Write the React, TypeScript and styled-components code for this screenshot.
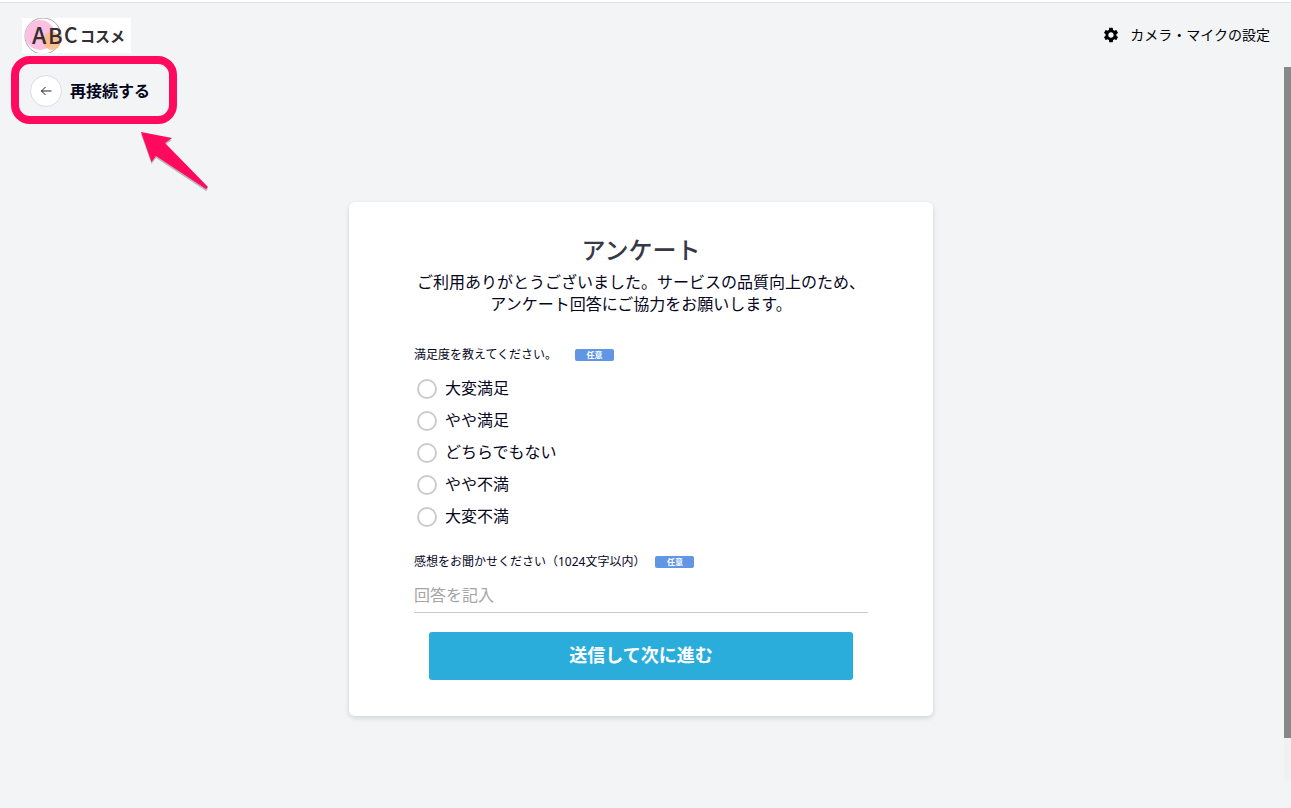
import React from "react";
import styled, { createGlobalStyle } from "styled-components";

const GlobalStyle = createGlobalStyle`
  *, *::before, *::after { box-sizing: border-box; }
  body {
    margin: 0;
    background: #f2f4f6;
    color: #05051c;
    font-family: "Noto Sans", "Noto Sans CJK JP", sans-serif;
    font-size: 16px;
  }
  button, input { font: inherit; color: inherit; }
`;

const Page = styled.div`
  display: flex;
  flex-direction: column;
  min-height: 100vh;
  padding-bottom: 27px;
`;

const TopLine = styled.div`
  height: 3px;
  background: #fff;
  border-bottom: 1px solid #dfe3e4;
`;

const Header = styled.header`
  display: flex;
  align-items: center;
  justify-content: space-between;
  height: 64px;
  padding: 0 21px 0 22px;
`;

const Logo = styled.svg`
  display: block;
  width: 109px;
  height: 35px;
`;

const SettingsButton = styled.button`
  display: flex;
  align-items: center;
  gap: 10px;
  padding: 0;
  border: 0;
  background: none;
  color: #000;
  font-size: 14px;
  line-height: 20px;
  cursor: pointer;

  svg { width: 18px; height: 18px; }
`;

const Main = styled.main`
  display: flex;
  flex: 1;
`;

const Content = styled.div`
  flex: 1;
  padding: 8px 22px 65px 20px;
`;

const ScrollTrack = styled.div`
  width: 7px;
  background: #f1f1f1;
`;

const ScrollThumb = styled.div`
  height: 94%;
  background: #888;
`;

const BackArea = styled.div`
  position: relative;
  width: fit-content;
  padding-left: 10px;
`;

const BackButton = styled.button`
  display: flex;
  align-items: center;
  gap: 8px;
  padding: 0;
  border: 0;
  background: none;
  font-weight: 700;
  line-height: 30px;
  cursor: pointer;
`;

const BackCircle = styled.span`
  display: flex;
  align-items: center;
  justify-content: center;
  width: 32px;
  height: 32px;
  border: 1px solid #dcdce6;
  border-radius: 50%;
  background: #fff;

  svg { width: 12px; height: 12px; }
`;

const Highlight = styled.div`
  position: absolute;
  top: -19px;
  left: -9px;
  width: 166px;
  height: 68px;
  border: 8px solid #ff0a5c;
  border-radius: 19px;
  pointer-events: none;
`;

const Pointer = styled.svg`
  position: absolute;
  top: 54px;
  left: 118px;
  width: 74px;
  height: 66px;
  pointer-events: none;
`;

const Card = styled.form`
  max-width: 584px;
  margin: 95px auto 0;
  padding: 32px 65px 36px;
  border-radius: 6px;
  background: #fff;
  box-shadow: 0 2px 5px rgba(0, 0, 0, 0.14);
`;

const Title = styled.h1`
  margin: 0;
  color: #363848;
  font-size: 24px;
  font-weight: 500;
  line-height: 32px;
  text-align: center;
`;

const Lead = styled.p`
  margin: 5px 0 0;
  line-height: 22px;
  text-align: center;
`;

const Question = styled.fieldset`
  min-width: 0;
  margin: 32px 0 0;
  padding: 0;
  border: 0;
`;

const TextQuestion = styled.div`
  margin-top: 21px;
`;

const QuestionHead = styled.div<{ $gap: number }>`
  display: flex;
  align-items: center;
  gap: ${(p) => p.$gap}px;
  font-size: 12px;
  line-height: 16px;
`;

const Badge = styled.span`
  width: 39px;
  height: 12px;
  border-radius: 2px;
  background: #6096e4;
  color: #fff;
  font-size: 8px;
  font-weight: 700;
  line-height: 12px;
  text-align: center;
`;

const Options = styled.div`
  padding: 10px 0 0 3px;
`;

const Option = styled.label`
  display: flex;
  align-items: center;
  gap: 8px;
  height: 32px;
  line-height: 22px;
  cursor: pointer;
`;

const OptionText = styled.span`
  padding-bottom: 2px;
`;

const Radio = styled.input`
  appearance: none;
  width: 20px;
  height: 20px;
  margin: 0;
  border: 2px solid #ccc;
  border-radius: 50%;
  background: #fff;

  &:checked { border: 6px solid #2aaddb; }
`;

const Answer = styled.input`
  display: block;
  width: 100%;
  height: 36px;
  margin-top: 7px;
  padding: 0;
  border: 0;
  border-bottom: 1px solid #ccc;
  outline: 0;
  background: none;
  line-height: 22px;

  &::placeholder { color: #a5a5a5; opacity: 1; }
`;

const Submit = styled.button`
  display: block;
  width: calc(100% - 30px);
  height: 48px;
  margin: 19px auto 0;
  padding: 0 0 2px;
  border: 0;
  border-radius: 3px;
  background: #2aaddb;
  color: #fff;
  font-size: 18px;
  font-weight: 700;
  line-height: 24px;
  cursor: pointer;
`;

const choices = ["大変満足", "やや満足", "どちらでもない", "やや不満", "大変不満"];

export default function App() {
  return (
    <Page>
      <GlobalStyle />
      <TopLine />
      <Header>
        <Logo viewBox="0 0 109 35" role="img" aria-label="ABCコスメ">
          <rect width="109" height="35" fill="#fff" />
          <circle cx="21" cy="18" r="18" fill="none" stroke="#aaa" strokeWidth="1" />
          <circle cx="18" cy="17" r="15" fill="#fdbfe2" />
          <circle cx="30" cy="23" r="9" fill="#fdb97c" fillOpacity="0.85" />
          <g fill="#332e30" fontFamily="'Noto Sans CJK JP', sans-serif" fontWeight="500">
            <text x="10" y="26" fontSize="23">A</text>
            <text x="26" y="26" fontSize="22">B</text>
            <text x="42" y="25" fontSize="21">C</text>
            <text x="58" y="24" fontSize="15" fontWeight="700">コ</text>
            <text x="73" y="24" fontSize="15" fontWeight="700">ス</text>
            <text x="88" y="24" fontSize="15" fontWeight="700">メ</text>
          </g>
        </Logo>
        <SettingsButton type="button">
          <svg viewBox="0 0 24 24" fill="currentColor" aria-hidden="true">
            <path d="M19.14 12.94c.04-.3.06-.61.06-.94 0-.32-.02-.64-.07-.94l2.03-1.58a.49.49 0 0 0 .12-.61l-1.92-3.32a.488.488 0 0 0-.59-.22l-2.39.96c-.5-.38-1.03-.7-1.62-.94l-.36-2.54a.484.484 0 0 0-.48-.41h-3.84c-.24 0-.43.17-.47.41l-.36 2.54c-.59.24-1.13.57-1.62.94l-2.39-.96c-.22-.08-.47 0-.59.22L2.74 8.87c-.12.21-.08.47.12.61l2.03 1.58c-.05.3-.09.63-.09.94s.02.64.07.94l-2.03 1.58a.49.49 0 0 0-.12.61l1.92 3.32c.12.22.37.29.59.22l2.39-.96c.5.38 1.03.7 1.62.94l.36 2.54c.05.24.24.41.48.41h3.84c.24 0 .44-.17.47-.41l.36-2.54c.59-.24 1.13-.56 1.62-.94l2.39.96c.22.08.47 0 .59-.22l1.92-3.32c.12-.22.07-.47-.12-.61l-2.01-1.58zM12 15.6A3.61 3.61 0 0 1 8.4 12c0-1.98 1.62-3.6 3.6-3.6s3.6 1.62 3.6 3.6-1.62 3.6-3.6 3.6z" />
          </svg>
          カメラ・マイクの設定
        </SettingsButton>
      </Header>
      <Main>
        <Content>
          <BackArea>
            <BackButton type="button">
              <BackCircle>
                <svg viewBox="0 0 12 12" fill="none" stroke="#222233" aria-hidden="true">
                  <path d="M11.500 6H1M5.500 2L1.500 6l4 4" />
                </svg>
              </BackCircle>
              再接続する
            </BackButton>
            <Highlight />
            <Pointer viewBox="0 0 74 66" aria-hidden="true">
              <path
                d="M3 3L34 9L27 14L70 58L68 60L18 27L13.500 33Z"
                fill="#000"
                fillOpacity="0.25"
                transform="translate(0 2)"
              />
              <path d="M3 3L34 9L27 14L70 58L68 60L18 27L13.500 33Z" fill="#ff0a5c" />
            </Pointer>
          </BackArea>
          <Card onSubmit={(e) => e.preventDefault()}>
            <Title>アンケート</Title>
            <Lead>
              ご利用ありがとうございました。サービスの品質向上のため、
              <br />
              アンケート回答にご協力をお願いします。
            </Lead>
            <Question aria-labelledby="satisfaction">
              <QuestionHead $gap={18}>
                <span id="satisfaction">満足度を教えてください。</span>
                <Badge>任意</Badge>
              </QuestionHead>
              <Options>
                {choices.map((choice) => (
                  <Option key={choice}>
                    <Radio type="radio" name="satisfaction" value={choice} />
                    <OptionText>{choice}</OptionText>
                  </Option>
                ))}
              </Options>
            </Question>
            <TextQuestion>
              <QuestionHead $gap={10}>
                <label htmlFor="comment">感想をお聞かせください（1024文字以内）</label>
                <Badge>任意</Badge>
              </QuestionHead>
              <Answer id="comment" type="text" maxLength={1024} placeholder="回答を記入" />
            </TextQuestion>
            <Submit type="submit">送信して次に進む</Submit>
          </Card>
        </Content>
        <ScrollTrack>
          <ScrollThumb />
        </ScrollTrack>
      </Main>
    </Page>
  );
}
